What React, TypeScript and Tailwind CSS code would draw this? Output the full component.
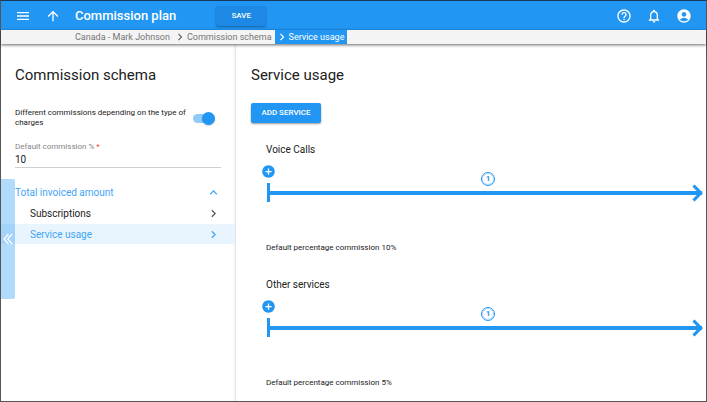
import { useState } from "react";
import {
  MdAccountCircle,
  MdAddCircle,
  MdArrowUpward,
  MdChevronRight,
  MdExpandLess,
  MdHelpOutline,
  MdMenu,
  MdNotificationsNone,
} from "react-icons/md";

type Service = { name: string; commission: number; ranges: number };

const services: Service[] = [
  { name: "Voice Calls", commission: 10, ranges: 1 },
  { name: "Other services", commission: 5, ranges: 1 },
];

function Header() {
  return (
    <header className="flex h-[29px] items-center bg-[#2196f3] pr-3.5 pl-3.5 text-white">
      <button type="button" aria-label="Menu" className="mr-3.5">
        <MdMenu size={16} />
      </button>
      <button type="button" aria-label="Up" className="mr-3.5">
        <MdArrowUpward size={16} />
      </button>
      <h1 className="text-[13px] leading-4 font-medium">Commission plan</h1>
      <button
        type="button"
        className="ml-10 h-5 w-[50px] rounded-[2px] bg-[#1e88e5] text-[8px] font-medium shadow-[0_1px_2px_rgba(0,0,0,0.35)]"
      >
        SAVE
      </button>
      <div className="ml-auto flex items-center gap-3.5">
        <button type="button" aria-label="Help">
          <MdHelpOutline size={16} />
        </button>
        <button type="button" aria-label="Notifications">
          <MdNotificationsNone size={16} />
        </button>
        <button type="button" aria-label="Account">
          <MdAccountCircle size={16} />
        </button>
      </div>
    </header>
  );
}

function Breadcrumbs() {
  return (
    <nav
      aria-label="Breadcrumb"
      className="relative z-10 flex h-3.5 items-center bg-[#f4f4f4] pl-[74px] text-[9px] leading-3.5 text-[#757575] shadow-[0_1px_3px_rgba(0,0,0,0.6)]"
    >
      <a href="#customer">Canada - Mark Johnson</a>
      <a href="#schema" className="ml-[3px] flex items-center">
        <MdChevronRight size={14} className="text-[#616161]" />
        Commission schema
      </a>
      <a
        href="#usage"
        aria-current="page"
        className="ml-[3px] flex h-3.5 items-center bg-[#2196f3] pr-[3px] text-white"
      >
        <MdChevronRight size={14} />
        Service usage
      </a>
    </nav>
  );
}

function Sidebar() {
  const [enabled, setEnabled] = useState(true);
  const [commission, setCommission] = useState("10");

  return (
    <aside className="relative w-[235px] shrink-0 border-r border-[#e4e4e4] pt-[21px] shadow-[inset_-2px_0_2px_rgba(0,0,0,0.03)]">
      <h2 className="pl-3.5 text-[15px] leading-5">Commission schema</h2>
      <label className="mt-[23px] flex items-center justify-between pr-5 pl-3.5 text-[8px] leading-2.5">
        <span>Different commissions depending on the type of charges</span>
        <input
          type="checkbox"
          role="switch"
          checked={enabled}
          onChange={(e) => setEnabled(e.target.checked)}
          className="sr-only"
        />
        <span className="ml-1 flex h-[9px] w-[22px] shrink-0 items-center justify-end rounded-full bg-[#90caf9]">
          <span className="size-[13px] shrink-0 rounded-full bg-[#2196f3] shadow-[0_1px_1px_rgba(0,0,0,0.2)]" />
        </span>
      </label>
      <div className="mx-3.5 mt-3.5">
        <label
          htmlFor="commission"
          className="block text-[8px] leading-2.5 text-[#858585]"
        >
          Default commission % <span className="text-[#f44336]">*</span>
        </label>
        <input
          id="commission"
          value={commission}
          onChange={(e) => setCommission(e.target.value)}
          className="block h-4 w-full border-b border-[#cfcfcf] text-[10px] outline-none"
        />
      </div>
      <div className="mt-3.5 text-[10px]">
        <button
          type="button"
          aria-expanded="true"
          className="flex h-5 w-full items-center justify-between pr-3.5 pl-3.5 text-[#42a5f5]"
        >
          Total invoiced amount
          <MdExpandLess size={15} />
        </button>
        <a
          href="#subscriptions"
          className="flex h-[22px] items-center justify-between pr-3.5 pl-[29px]"
        >
          Subscriptions
          <MdChevronRight size={15} className="text-[#555]" />
        </a>
        <a
          href="#usage"
          className="flex h-5 items-center justify-between bg-[#e9f5fe] pr-3.5 pl-[29px] text-[#42a5f5]"
        >
          Service usage
          <MdChevronRight size={15} />
        </a>
      </div>
      <button
        type="button"
        aria-label="Collapse panel"
        className="absolute top-[135px] left-0 flex h-[120px] w-3.5 items-center justify-center rounded-r-[2px] bg-[#2196f3]/35 text-white"
      >
        <svg
          viewBox="0 0 10 12"
          className="h-3 w-2.5"
          fill="none"
          stroke="currentColor"
          strokeWidth="1.2"
        >
          <path d="M5.5 1 1 6l4.5 5M9.2 1 4.7 6l4.5 5" />
        </svg>
      </button>
    </aside>
  );
}

function ServiceTimeline({ service }: { service: Service }) {
  return (
    <section>
      <h3 className="pl-[15px] text-[10px] leading-4">{service.name}</h3>
      <div className="mt-1.5 pr-[3px] pl-2.5">
        <div className="grid h-[22px] grid-cols-[1fr_auto_1fr]">
          <button
            type="button"
            aria-label={`Add range to ${service.name}`}
            className="self-start justify-self-start text-[#2196f3]"
          >
            <MdAddCircle size={15} />
          </button>
          <span className="ml-3 flex size-3.5 items-center justify-center self-end rounded-full border border-[#2196f3] text-[8px] leading-3 font-bold text-[#2196f3] ring-1 ring-[#2196f3]/30 ring-inset">
            {service.ranges}
          </span>
        </div>
        <div className="-mt-[3px] flex items-center pl-1.5">
          <span className="h-[19px] w-[3px] bg-[#2196f3]" />
          <span className="h-1 flex-1 bg-[#2196f3]" />
          <svg
            viewBox="0 0 11 18"
            className="-ml-2.5 h-[18px] w-[11px]"
            fill="none"
            stroke="#2196f3"
            strokeWidth="3.2"
          >
            <path d="M1.5 1.5 8.7 9l-7.2 7.5" />
          </svg>
        </div>
      </div>
      <p className="mt-10 pl-[15px] text-[8px] leading-3">
        Default percentage commission {service.commission}%
      </p>
    </section>
  );
}

export default function App() {
  return (
    <div className="flex min-h-screen flex-col border border-t-[#17395c] border-r-[#555] border-b-[#555] border-l-[#555] bg-white font-[Roboto,sans-serif] text-[#212121]">
      <Header />
      <Breadcrumbs />
      <div className="flex flex-1">
        <Sidebar />
        <main className="min-w-0 flex-1 pt-[21px] pl-[15px]">
          <h2 className="text-[15px] leading-5">Service usage</h2>
          <button
            type="button"
            className="mt-[18px] block h-5 w-[70px] rounded-[2px] bg-[#2196f3] text-[8px] font-medium text-white shadow-[0_1px_2px_rgba(0,0,0,0.4)]"
          >
            ADD SERVICE
          </button>
          <div className="mt-[19px] flex flex-col gap-[23px]">
            {services.map((service) => (
              <ServiceTimeline key={service.name} service={service} />
            ))}
          </div>
        </main>
      </div>
    </div>
  );
}
